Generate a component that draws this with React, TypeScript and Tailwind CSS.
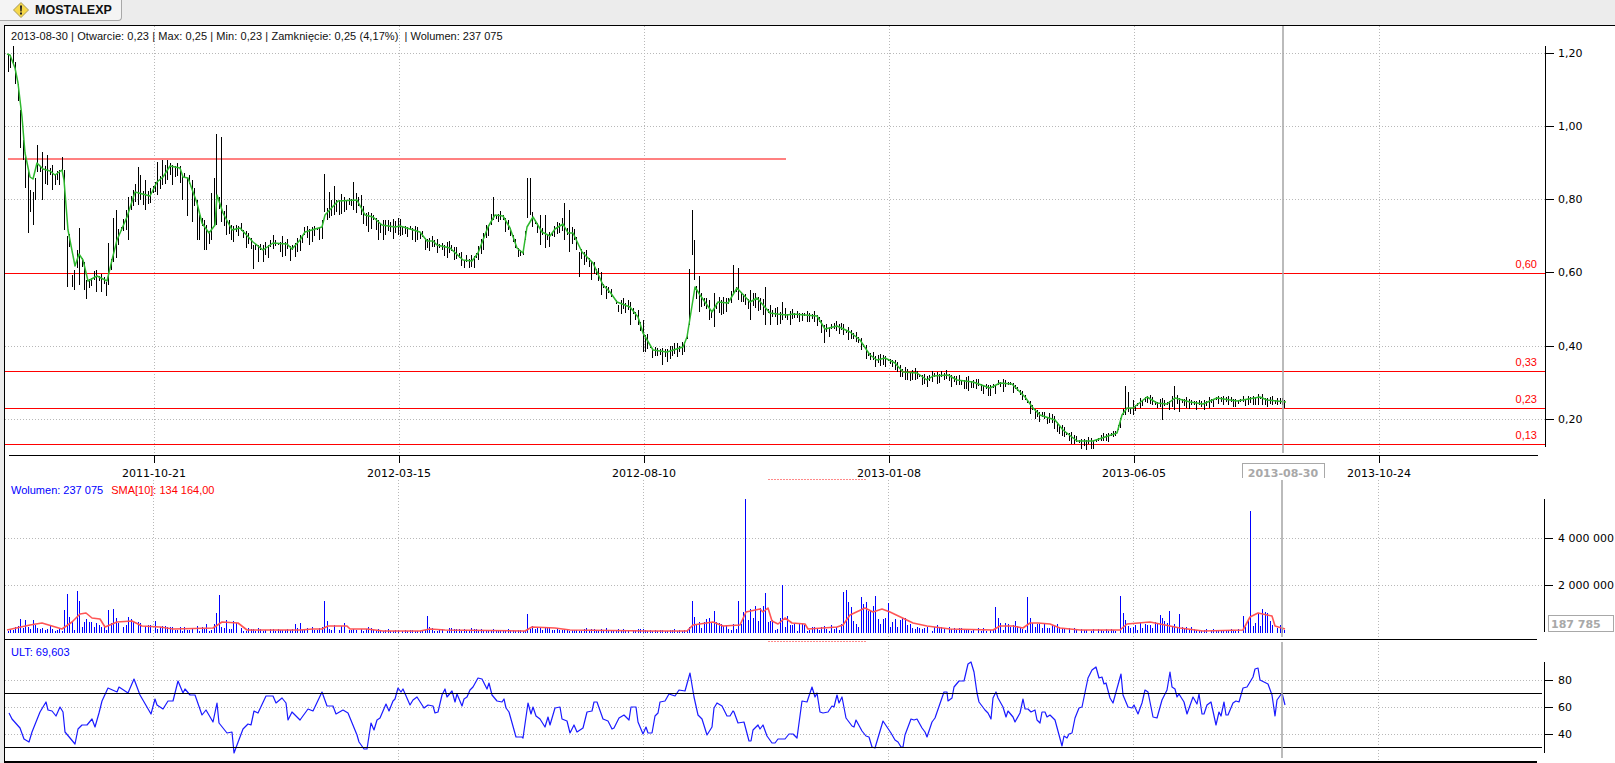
import type { ReactNode } from "react";

type Pt = [number, number];

// moving average of the price, page coordinates read off the chart
const priceMa: Pt[] = [[7,54],[10,55],[15,68],[18,83],[22,117],[25,153],[30,177],[33,179],[37,163],[43,169],[50,171],[55,175],[62,170],[64,180],[68,230],[75,266],[79,254],[83,260],[88,281],[97,276],[107,281],[112,260],[117,240],[127,217],[135,192],[150,196],[157,182],[163,177],[170,166],[180,168],[183,177],[188,178],[197,203],[202,223],[209,233],[215,225],[217,195],[223,213],[232,230],[240,228],[253,242],[263,250],[273,243],[287,244],[292,249],[300,240],[305,232],[322,227],[325,215],[338,201],[357,200],[365,215],[373,217],[382,225],[395,227],[400,226],[420,232],[427,241],[433,241],[437,245],[450,248],[463,260],[472,261],[478,253],[488,227],[495,215],[503,216],[510,228],[517,248],[523,253],[527,227],[533,217],[542,232],[550,236],[555,229],[563,224],[568,233],[573,233],[582,252],[593,263],[603,285],[610,292],[617,302],[630,307],[638,317],[643,333],[653,350],[667,352],[683,347],[687,337],[695,287],[700,295],[712,312],[718,302],[728,303],[737,288],[750,302],[757,298],[770,313],[777,314],[787,315],[793,314],[817,316],[825,329],[837,326],[850,332],[860,340],[870,355],[877,360],[885,358],[895,363],[903,372],[917,373],[927,380],[933,376],[948,375],[957,380],[973,382],[990,388],[1000,383],[1012,384],[1025,397],[1033,408],[1040,415],[1055,420],[1063,430],[1077,441],[1093,441],[1117,433],[1122,415],[1127,408],[1133,408],[1147,397],[1157,403],[1167,404],[1175,398],[1190,402],[1203,404],[1217,398],[1237,401],[1260,397],[1267,400],[1286,402]];

// [x, high, low] for the bars that stick out
const priceBars: [number, number, number][] = [[12,46,64],[8,54,72],[10,55,68],[15,62,84],[18,84,101],[20,110,148],[23,140,160],[25,155,188],[27,170,233],[30,190,212],[32,192,225],[35,178,200],[38,145,172],[42,152,200],[48,155,185],[53,165,190],[62,157,178],[63,157,172],[65,170,230],[68,236,287],[71,275,287],[73,275,299],[75,270,290],[78,230,285],[80,228,285],[85,262,290],[87,280,299],[95,270,292],[105,282,296],[108,243,285],[113,218,262],[117,210,258],[127,197,240],[137,167,205],[140,175,200],[145,180,210],[157,162,195],[163,160,185],[167,160,180],[172,165,185],[183,175,200],[186,178,216],[192,180,222],[196,200,240],[200,215,240],[203,220,250],[207,225,250],[212,193,240],[214,178,225],[217,134,225],[220,137,222],[225,205,235],[231,225,240],[254,245,269],[258,245,262],[262,245,262],[325,174,212],[329,192,218],[335,186,215],[353,182,210],[360,195,215],[367,212,232],[378,220,240],[384,220,240],[398,218,235],[492,197,220],[528,178,218],[531,178,215],[540,215,245],[545,215,248],[563,203,240],[570,210,252],[580,252,277],[591,262,280],[600,272,295],[614,300,300],[618,305,312],[621,300,314],[630,302,325],[637,310,325],[642,320,352],[646,335,352],[652,348,358],[662,348,365],[676,343,357],[689,269,325],[692,210,255],[695,240,280],[699,276,312],[708,300,320],[714,293,327],[721,300,315],[734,265,295],[737,268,300],[750,290,320],[766,287,325],[769,305,325],[783,302,320],[823,325,343],[1124,386,415],[1127,392,412],[1133,400,415],[1161,398,420],[1173,386,410],[1180,398,412],[1257,394,405]];

const smaLine: Pt[] = [[7,630],[30,625],[42,623],[62,629],[72,622],[80,614],[86,613],[92,618],[100,619],[105,627],[117,622],[132,621],[142,626],[160,627],[173,629],[213,628],[222,622],[238,623],[247,630],[300,630],[313,629],[322,629],[328,626],[347,626],[350,629],[367,629],[383,631],[420,631],[430,629],[445,630],[525,631],[532,627],[555,628],[570,630],[650,631],[687,631],[693,625],[713,622],[723,626],[740,625],[746,612],[760,609],[763,612],[768,608],[772,621],[778,624],[785,618],[792,623],[805,624],[808,629],[837,627],[843,625],[850,615],[865,608],[873,612],[882,609],[890,612],[913,623],[927,626],[950,629],[993,630],[1000,626],[1013,626],[1023,628],[1030,623],[1038,623],[1050,624],[1060,628],[1080,630],[1120,630],[1127,624],[1150,622],[1165,625],[1180,628],[1203,631],[1243,630],[1250,617],[1258,613],[1272,616],[1275,626],[1285,629]];

// [x, top of the volume bar]
const volBars: Pt[] = [[64,610],[67,594],[69,617],[77,591],[79,601],[20,619],[25,620],[32,620],[84,622],[91,622],[108,610],[113,609],[116,618],[130,619],[134,622],[155,621],[162,626],[206,624],[216,613],[219,595],[222,627],[295,624],[300,623],[324,601],[326,621],[334,625],[427,616],[527,614],[691,601],[694,617],[699,622],[708,618],[713,611],[738,601],[745,499],[748,620],[752,618],[765,593],[767,622],[782,585],[785,627],[843,592],[845,590],[848,602],[850,607],[853,621],[860,597],[863,604],[865,602],[869,611],[872,606],[875,596],[878,619],[882,619],[887,603],[895,619],[901,620],[905,618],[995,607],[997,618],[1000,623],[1014,621],[1027,597],[1030,618],[1120,596],[1122,613],[1125,620],[1159,615],[1161,618],[1169,611],[1178,614],[1242,616],[1250,511],[1254,623],[1257,613],[1259,626],[1271,625],[1279,625]];

const ultLine: Pt[] = [[9,713],[12,719],[20,728],[24,739],[29,742],[32,732],[40,712],[46,702],[48,710],[52,711],[56,716],[60,707],[63,712],[65,732],[75,744],[78,729],[82,725],[87,725],[92,719],[95,727],[99,713],[102,701],[108,688],[117,692],[119,687],[128,693],[134,679],[140,695],[151,714],[155,699],[157,705],[163,709],[168,701],[173,701],[178,681],[183,693],[185,689],[190,695],[195,695],[202,715],[206,710],[213,722],[217,703],[219,723],[227,733],[232,732],[234,753],[243,729],[248,724],[251,725],[254,711],[258,713],[266,696],[273,696],[276,703],[282,698],[286,703],[288,720],[292,712],[300,720],[308,709],[313,711],[322,692],[327,706],[333,706],[336,714],[343,710],[348,713],[357,735],[359,742],[364,749],[367,749],[371,723],[374,730],[377,720],[380,718],[386,704],[389,711],[393,701],[395,699],[398,688],[401,692],[403,689],[410,705],[413,700],[417,697],[424,708],[428,705],[433,706],[435,713],[438,712],[442,695],[445,689],[447,697],[452,691],[455,702],[457,694],[462,706],[464,699],[467,697],[470,690],[473,687],[478,678],[482,679],[487,689],[489,683],[492,695],[497,701],[502,702],[504,699],[506,708],[509,712],[516,737],[522,737],[523,738],[528,703],[531,714],[533,707],[536,716],[540,719],[545,727],[548,717],[550,725],[555,708],[560,707],[562,719],[567,721],[570,733],[574,725],[577,732],[583,728],[587,712],[592,711],[594,702],[597,702],[603,719],[608,721],[612,729],[614,728],[619,718],[624,715],[629,720],[631,707],[636,707],[638,722],[643,734],[646,727],[648,733],[652,733],[655,716],[658,713],[660,702],[665,701],[669,694],[675,696],[679,690],[685,691],[690,673],[694,697],[698,715],[702,719],[707,735],[712,727],[714,708],[717,703],[722,706],[727,716],[730,716],[733,711],[734,712],[738,723],[744,722],[749,741],[751,741],[753,730],[758,725],[760,729],[763,725],[767,736],[772,743],[775,743],[778,739],[785,739],[789,734],[793,734],[797,738],[802,701],[807,702],[812,687],[815,697],[817,693],[820,712],[823,713],[828,712],[832,706],[834,707],[837,695],[839,703],[842,697],[846,718],[852,726],[854,727],[856,720],[862,731],[866,736],[869,737],[872,747],[875,748],[883,721],[887,727],[891,733],[895,740],[898,742],[901,747],[903,747],[905,735],[911,719],[914,720],[917,719],[922,728],[925,732],[927,737],[932,722],[935,718],[944,692],[947,692],[948,701],[952,698],[954,687],[959,681],[964,681],[968,664],[971,662],[974,672],[977,693],[979,702],[985,710],[988,713],[991,719],[993,698],[996,692],[998,698],[1003,707],[1006,717],[1008,711],[1013,717],[1015,722],[1020,713],[1023,699],[1025,709],[1028,709],[1031,712],[1035,710],[1037,720],[1040,723],[1042,712],[1045,712],[1047,717],[1050,715],[1055,720],[1062,746],[1064,736],[1067,738],[1069,734],[1072,733],[1075,718],[1079,708],[1082,707],[1088,678],[1092,670],[1096,667],[1099,678],[1102,677],[1104,684],[1106,683],[1110,698],[1113,703],[1121,674],[1123,695],[1128,707],[1132,708],[1134,705],[1138,714],[1142,703],[1145,690],[1148,692],[1153,717],[1157,718],[1162,700],[1167,690],[1170,672],[1172,687],[1175,689],[1177,697],[1179,694],[1184,702],[1187,714],[1193,697],[1197,704],[1199,694],[1202,714],[1204,714],[1207,705],[1211,702],[1216,725],[1219,712],[1221,716],[1224,702],[1226,715],[1228,715],[1233,703],[1236,701],[1239,702],[1243,688],[1247,687],[1253,677],[1255,669],[1258,668],[1260,680],[1268,684],[1272,695],[1275,716],[1277,700],[1282,693],[1285,705]];

const BAR_STEP = 2.45;
const BAR_COUNT = 522;

const toPath = (pts: Pt[]) => pts.map((p, i) => `${i ? "L" : "M"}${p[0]} ${p[1]}`).join("");

const lerp = (pts: Pt[], x: number) => {
  for (let i = 1; i < pts.length; i++) {
    if (x <= pts[i][0]) {
      const [x0, y0] = pts[i - 1];
      const [x1, y1] = pts[i];
      return y0 + ((y1 - y0) * (x - x0)) / (x1 - x0 || 1);
    }
  }
  return pts[pts.length - 1][1];
};

// small fixed generator so the bars stay the same on every render
let seed = 1234;
const rnd = () => {
  seed = (seed * 16807) % 2147483647;
  return seed / 2147483647;
};

const barX = (i: number) => Math.round(8 + i * BAR_STEP) + 0.5;
const nearestBar = (x: number) => Math.round((x - 8) / BAR_STEP);

const buildPriceBars = () => {
  const fixed = new Map(priceBars.map((b) => [nearestBar(b[0]), b]));
  let d = "";
  for (let i = 0; i < BAR_COUNT; i++) {
    const x = barX(i);
    const ma = lerp(priceMa, x);
    const amp = x < 400 ? 12 : x < 800 ? 10 : x < 1100 ? 8 : 6;
    const hit = fixed.get(i);
    // most bars hang below the average, only some reach above it
    const hi = hit ? hit[1] : Math.round(ma - rnd() * amp * 0.7);
    const lo = hit ? hit[2] : Math.round(ma + 1 + rnd() * amp * 1.1);
    d += `M${x} ${hi}V${lo}`;
  }
  return d;
};

const buildVolBars = () => {
  const fixed = new Map(volBars.map((b) => [nearestBar(b[0]), b[1]]));
  let d = "";
  for (let i = 0; i < BAR_COUNT; i++) {
    const x = barX(i);
    const level = 633 - lerp(smaLine, x);
    const r = rnd();
    const top = fixed.get(i) ?? Math.round(633 - (1.5 + r * level * 1.25));
    if (r < 0.06 && !fixed.has(i)) continue;
    d += `M${x} ${top}V633`;
  }
  return d;
};

const pricePath = buildPriceBars();
const volPath = buildVolBars();

const priceTicks = ["1,20", "1,00", "0,80", "0,60", "0,40", "0,20"];
const dates: [number, string][] = [[154, "2011-10-21"], [399, "2012-03-15"], [644, "2012-08-10"], [889, "2013-01-08"], [1134, "2013-06-05"], [1379, "2013-10-24"]];
const levels: [number, string, number][] = [[273, "0,60", 264], [371, "0,33", 362], [408, "0,23", 399], [444, "0,13", 435]];

const axisText = "font-['DejaVu_Sans',sans-serif] text-[11px] fill-black";
const GRID = "#b8b8b8";
const CURSOR = "#a4a4a4";

// every panel draws in page coordinates, so the viewBox starts at the panel's own top
const Panel = ({ top, height, children, overlay }: { top: number; height: number; children: ReactNode; overlay?: ReactNode }) => (
  <div className="relative w-full shrink-0" style={{ height }}>
    <svg width={1610} height={height} viewBox={`5 ${top} 1610 ${height}`} className="block">
      {children}
    </svg>
    {overlay}
  </div>
);

const Dotted = ({ d }: { d: string }) => <path d={d} stroke={GRID} strokeWidth={1} strokeDasharray="1 2" fill="none" shapeRendering="crispEdges" />;
const Rule = ({ d, color = "#000", width = 1 }: { d: string; color?: string; width?: number }) => (
  <path d={d} stroke={color} strokeWidth={width} fill="none" shapeRendering="crispEdges" />
);

export default function App() {
  return (
    <div className="flex h-[763px] w-[1615px] flex-col overflow-hidden bg-[#ececec] font-['Liberation_Sans',sans-serif]">
      <div className="flex h-[25px] shrink-0 items-start">
        <div className="flex h-[21px] w-[122px] items-center gap-[6px] rounded-br-[4px] border-r border-b border-[#a8a8a8] bg-[#f4f4f4] pl-[13px]">
          <svg width="16" height="16" viewBox="0 0 16 16" className="shrink-0">
            <path d="M8 .5 15.5 8 8 15.5.5 8Z" fill="#f6d84a" stroke="#a89a58" strokeWidth="1" strokeLinejoin="round" />
            <path d="M7 3.5h2L8.7 9.5H7.3Z" fill="#222" />
            <rect x="7" y="10.5" width="2" height="2" fill="#222" />
          </svg>
          <span className="text-[12.5px] font-bold leading-none text-[#111]">MOSTALEXP</span>
        </div>
      </div>

      <div className="ml-1 flex flex-1 flex-col border-t border-l border-black bg-white">
        <Panel
          top={26}
          height={454}
          overlay={
            <div className="absolute left-[6px] top-[3px] flex whitespace-pre text-[11px] leading-[14px] text-[#111]">
              <span className="tracking-[0.07px]">2013-08-30 | Otwarcie: 0,23 | Max: 0,25 | Min: 0,23 | Zamknięcie: 0,25 (4,17%)</span>
              <span>  | Wolumen: 237 075</span>
            </div>
          }
        >
          <Dotted d={[53, 126, 199, 273, 346, 419].map((y) => `M5 ${y + 0.5}H1545`).join("")} />
          <Dotted d={dates.map(([x]) => `M${x + 0.5} 26V455`).join("")} />

          <Rule d="M8 159H786" color="#ff8080" width={2} />
          {levels.map(([y]) => (
            <Rule key={y} d={`M5 ${y + 0.5}H1545`} color="#ff0000" />
          ))}
          {levels.map(([, label, y]) => (
            <text key={label} x={1537} y={y + 4} textAnchor="end" className="font-['Liberation_Sans',sans-serif] text-[11px] fill-[#ff0000]">
              {label}
            </text>
          ))}

          <path d={pricePath} stroke="#000" strokeWidth={1} fill="none" shapeRendering="crispEdges" />
          <path d={toPath(priceMa)} stroke="#2eb82e" strokeWidth={1.5} fill="none" strokeLinejoin="round" />

          <path d="M1283 26V453" stroke={CURSOR} strokeWidth={1.5} />

          <Rule d="M1545.5 46V447" />
          {priceTicks.map((t, i) => {
            const y = [53, 126, 199, 272, 346, 419][i];
            return (
              <g key={t}>
                <Rule d={`M1545 ${y + 0.5}H1554`} />
                <text x={1558} y={y + 4} className={axisText}>
                  {t}
                </text>
              </g>
            );
          })}

          <Rule d="M9 455.5H1538" />
          {dates.map(([x, label]) => (
            <g key={label}>
              <Rule d={`M${x + 0.5} 455V463`} />
              <text x={x} y={477} textAnchor="middle" className={axisText}>
                {label}
              </text>
            </g>
          ))}
          <path d="M1242.5 478V463.5H1324.5V478" fill="#fff" stroke="#a8a8a8" strokeWidth={1} shapeRendering="crispEdges" />
          <text x={1283} y={477} textAnchor="middle" className="font-['DejaVu_Sans',sans-serif] text-[11px] font-bold fill-[#a8a8a8]">
            2013-08-30
          </text>
          <path d="M768 479.5H867" stroke="#ff8a8a" strokeDasharray="2 1" shapeRendering="crispEdges" />
        </Panel>

        <Panel
          top={480}
          height={160}
          overlay={
            <div className="absolute left-[6px] top-[3px] flex gap-2 whitespace-pre text-[11px] leading-[14px]">
              <span className="text-[#0000ff]">Wolumen: 237 075</span>
              <span className="text-[#ff0000]">SMA[10]: 134 164,00</span>
            </div>
          }
        >
          <Dotted d="M5 538.5H1544M5 585.5H1544" />
          <Dotted d={dates.map(([x]) => `M${x - 0.5} 480V637`).join("")} />
          <path d={volPath} stroke="#0000ff" strokeWidth={1} fill="none" shapeRendering="crispEdges" />
          <path d={toPath(smaLine)} stroke="#ff5555" strokeWidth={1.6} fill="none" strokeLinejoin="round" />
          <path d="M1282 480V637" stroke={CURSOR} strokeWidth={1.5} />
          <Rule d="M1544.5 499V632" />
          {[[538, "4 000 000"], [585, "2 000 000"]].map(([y, t]) => (
            <g key={t}>
              <Rule d={`M1544 ${Number(y) + 0.5}H1553`} />
              <text x={1558} y={Number(y) + 4} className={axisText}>
                {t}
              </text>
            </g>
          ))}
          <rect x={1548.5} y={615.5} width={65} height={16} fill="#fff" stroke="#a8a8a8" shapeRendering="crispEdges" />
          <text x={1551} y={628} className="font-['DejaVu_Sans',sans-serif] text-[11px] font-bold fill-[#a8a8a8]">
            187 785
          </text>
          <Rule d="M5 639.5H1537" />
        </Panel>

        <Panel
          top={640}
          height={123}
          overlay={<div className="absolute left-[6px] top-[5px] whitespace-pre text-[11px] leading-[14px] text-[#0000ff]">ULT: 69,603</div>}
        >
          <path d="M768 641.5H867" stroke="#ff8a8a" strokeDasharray="2 1" shapeRendering="crispEdges" />
          <Dotted d="M5 680.5H1544M5 707.5H1544M5 734.5H1544" />
          <Dotted d={dates.map(([x]) => `M${x - 0.5} 642V760`).join("")} />
          <path d={toPath(ultLine)} stroke="#1a1aff" strokeWidth={1.2} fill="none" strokeLinejoin="round" />
          <Rule d="M5 693.5H1542M5 747.5H1542" />
          <path d="M1282 642V758" stroke={CURSOR} strokeWidth={1.5} />
          <Rule d="M1544.5 662V753" />
          {[[680, "80"], [707, "60"], [734, "40"]].map(([y, t]) => (
            <g key={t}>
              <Rule d={`M1544 ${Number(y) + 0.5}H1553`} />
              <text x={1558} y={Number(y) + 4} className={axisText}>
                {t}
              </text>
            </g>
          ))}
          <Rule d="M5 762H1537" width={2} />
        </Panel>
      </div>
    </div>
  );
}
